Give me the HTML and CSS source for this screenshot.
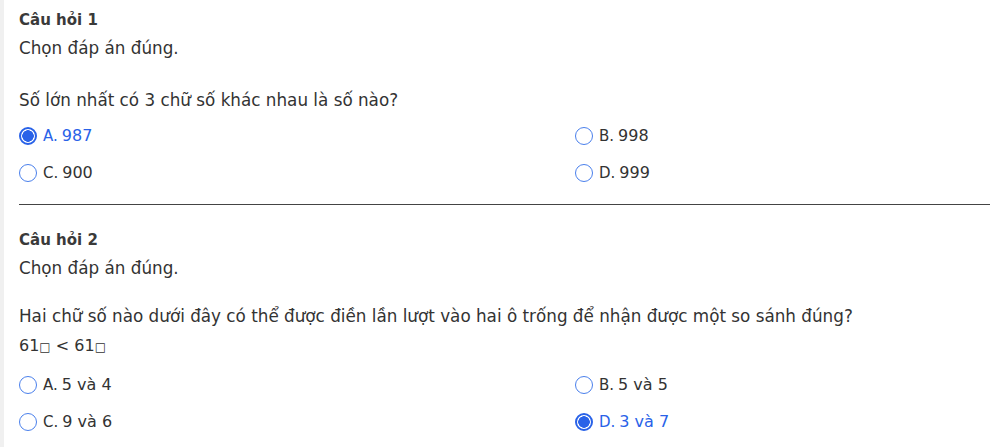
FILE: index.html
```html
<!DOCTYPE html>
<html lang="vi">
<head>
<meta charset="utf-8">
<link rel="stylesheet" href="styles.css">
</head>
<body>
<div class="page">
  <section class="question">
    <div class="q-title">Câu hỏi 1</div>
    <div class="q-instr">Chọn đáp án đúng.</div>
    <div class="q-text">Số lớn nhất có 3 chữ số khác nhau là số nào?</div>
    <div class="options">
      <div class="option selected"><span class="radio"></span><span class="lbl">A.</span><span class="val">987</span></div>
      <div class="option"><span class="radio"></span><span class="lbl">B.</span><span class="val">998</span></div>
      <div class="option"><span class="radio"></span><span class="lbl">C.</span><span class="val">900</span></div>
      <div class="option"><span class="radio"></span><span class="lbl">D.</span><span class="val">999</span></div>
    </div>
  </section>
  <hr class="divider">
  <section class="question">
    <div class="q-title">Câu hỏi 2</div>
    <div class="q-instr">Chọn đáp án đúng.</div>
    <div class="q-text q-text2">Hai chữ số nào dưới đây có thể được điền lần lượt vào hai ô trống để nhận được một so sánh đúng?</div>
    <div class="q-math">61<span class="box">□</span> &lt; 61<span class="box">□</span></div>
    <div class="options">
      <div class="option"><span class="radio"></span><span class="lbl">A.</span><span class="val">5 và 4</span></div>
      <div class="option"><span class="radio"></span><span class="lbl">B.</span><span class="val">5 và 5</span></div>
      <div class="option"><span class="radio"></span><span class="lbl">C.</span><span class="val">9 và 6</span></div>
      <div class="option selected"><span class="radio"></span><span class="lbl">D.</span><span class="val">3 và 7</span></div>
    </div>
  </section>
</div>
</body>
</html>
```

FILE: styles.css
```css
html, body {
  margin: 0;
  padding: 0;
  background: #fff;
}
body {
  font-family: "DejaVu Sans", Verdana, sans-serif;
  color: #333;
  font-size: 16.8px;
}
.page {
  border-left: 4px solid #f0f0f0;
  min-height: 447px;
  box-sizing: border-box;
  padding: 6px 6px 0 15px;
}
.q-title {
  font-weight: bold;
  font-size: 15px;
  line-height: 28px;
  color: #3a3a3a;
}
.q-instr {
  line-height: 28px;
}
.q-text {
  line-height: 28px;
  margin-top: 24px;
}
.q-text2 {
  margin-top: 20px;
}
.q-math {
  line-height: 31px;
  font-size: 16px;
}
.box {
  font-size: 12px;
}
.options {
  display: grid;
  grid-template-columns: 556px 1fr;
  grid-auto-rows: 37px;
  margin-top: 3px;
}
.option {
  display: flex;
  align-items: center;
}
.radio {
  width: 18px;
  height: 18px;
  box-sizing: border-box;
  border: 1.5px solid #4a80ec;
  border-radius: 50%;
  margin-right: 6px;
  flex: none;
}
.selected .radio {
  border: 2px solid #2962e8;
  background: radial-gradient(circle, #2962e8 0 5.5px, #fff 6px);
}
.lbl {
  font-size: 15px;
  margin-right: 4px;
}
.val {
  font-size: 16px;
}
.selected {
  color: #2962e8;
}
.divider {
  border: 0;
  border-top: 1px solid #444;
  margin: 13px 0 21px 0;
}
```
